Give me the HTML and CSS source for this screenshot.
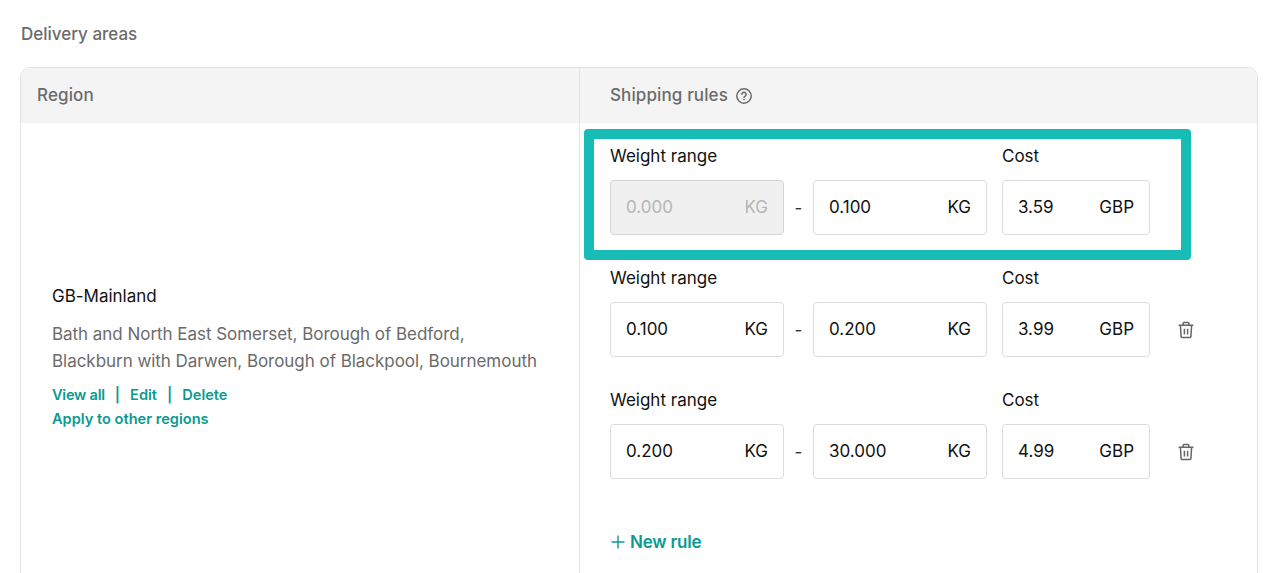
FILE: index.html
```html
<!DOCTYPE html>
<html lang="en">
<head>
<meta charset="utf-8">
<title>Delivery areas</title>
<link rel="stylesheet" href="styles.css">
</head>
<body>
<main class="page">
  <h2 class="title">Delivery areas</h2>
  <section class="table">
    <div class="cell head region-col">Region</div>
    <div class="cell head rules-col">
      Shipping rules
      <svg class="help" width="18" height="18" viewBox="0 0 18 18" fill="none" stroke="#6b6b6b" stroke-width="1.5"><circle cx="9" cy="9" r="7.2"/><path d="M6.9 7.3a2.1 2.1 0 1 1 3.2 1.8c-.7.4-1.1.8-1.1 1.5" stroke-linecap="round"/><circle cx="9" cy="12.6" r=".5" fill="#6b6b6b" stroke-width=".6"/></svg>
    </div>
    <div class="region-body region-col">
      <div class="region-name">GB-Mainland</div>
      <p class="region-list">Bath and North East Somerset, Borough of Bedford, Blackburn with Darwen, Borough of Blackpool, Bournemouth</p>
      <div class="links">
        <div><a class="view-all">View all</a><span class="sep">|</span><a>Edit</a><span class="sep">|</span><a>Delete</a></div>
        <div><a>Apply to other regions</a></div>
      </div>
    </div>
    <div class="rules-body rules-col">
      <div class="rule">
        <div class="labels"><span class="label-weight">Weight range</span><span>Cost</span></div>
        <div class="fields">
          <div class="input weight disabled"><span>0.000</span><span>KG</span></div>
          <span class="dash">-</span>
          <div class="input weight"><span>0.100</span><span>KG</span></div>
          <div class="input cost"><span>3.59</span><span>GBP</span></div>
        </div>
      </div>
      <div class="rule">
        <div class="labels"><span class="label-weight">Weight range</span><span>Cost</span></div>
        <div class="fields">
          <div class="input weight"><span>0.100</span><span>KG</span></div>
          <span class="dash">-</span>
          <div class="input weight"><span>0.200</span><span>KG</span></div>
          <div class="input cost"><span>3.99</span><span>GBP</span></div>
          <svg class="trash" width="18" height="18" viewBox="0 0 18 18" fill="none" stroke="#666" stroke-width="1.5"><path d="M1.6 4.2h14.8M6.1 4V2.6c0-.6.4-1 1-1h3.8c.6 0 1 .4 1 1V4M3.4 4.4l.7 11c0 .7.6 1.2 1.2 1.2h7.4c.6 0 1.2-.5 1.2-1.2l.7-11M7.4 7.8v5.6M10.6 7.8v5.6"/></svg>
        </div>
      </div>
      <div class="rule">
        <div class="labels"><span class="label-weight">Weight range</span><span>Cost</span></div>
        <div class="fields">
          <div class="input weight"><span>0.200</span><span>KG</span></div>
          <span class="dash">-</span>
          <div class="input weight"><span>30.000</span><span>KG</span></div>
          <div class="input cost"><span>4.99</span><span>GBP</span></div>
          <svg class="trash" width="18" height="18" viewBox="0 0 18 18" fill="none" stroke="#666" stroke-width="1.5"><path d="M1.6 4.2h14.8M6.1 4V2.6c0-.6.4-1 1-1h3.8c.6 0 1 .4 1 1V4M3.4 4.4l.7 11c0 .7.6 1.2 1.2 1.2h7.4c.6 0 1.2-.5 1.2-1.2l.7-11M7.4 7.8v5.6M10.6 7.8v5.6"/></svg>
        </div>
      </div>
      <a class="new-rule"><svg width="16" height="16" viewBox="0 0 16 16" fill="none" stroke="#0a9a92" stroke-width="1.4"><path d="M8 1.5v13M1.5 8h13"/></svg>New rule</a>
    </div>
    <div class="highlight"></div>
  </section>
</main>
</body>
</html>
```
FILE: styles.css
```css
* { box-sizing: border-box; }
html, body { margin: 0; height: 573px; overflow: hidden; background: #fff; }
body { font-family: Inter, "Liberation Sans", sans-serif; font-size: 17px; color: #111; }
.page { height: 573px; overflow: hidden; padding: 24px 12px 0 20px; }
.title { margin: 0 0 23px; padding-left: 1px; font-size: 17px; line-height: 20px; font-weight: 500; color: #6b6b6b; }
.table {
  position: relative;
  display: grid;
  grid-template-columns: 559px 1fr;
  grid-template-rows: 55px auto;
  border: 1px solid #e3e3e3;
  border-radius: 10px;
  height: 560px;
  overflow: hidden;
}
.head { background: #f4f4f4; font-weight: 500; color: #6b6b6b; display: flex; align-items: center; line-height: 20px; padding-bottom: 2px; letter-spacing: 0.12px; }
.head.region-col { padding-left: 16px; }
.head.rules-col { padding-left: 30px; gap: 7px; }
.help { margin-top: 2px; }
.region-col { border-right: 1px solid #e3e3e3; }
.region-body { display: flex; flex-direction: column; justify-content: flex-start; padding: 162px 38px 0 31px; }
.region-name { line-height: 22px; color: #111; letter-spacing: -0.02px; }
.region-list { margin: 14px 0 0; line-height: 27px; color: #6b6b6b; letter-spacing: -0.04px; }
.links { margin-top: 8px; font-size: 14.6px; font-weight: 600; line-height: 24px; color: #0a9a92; }
.view-all { letter-spacing: -0.25px; }
.sep { margin: 0 10px; font-weight: 600; }
.rules-body { padding: 23px 0 0 30px; }
.rule { margin-bottom: 33px; }
.labels { display: flex; line-height: 20px; margin-bottom: 14px; }
.label-weight { width: 392px; }
.fields { display: flex; align-items: center; }
.input {
  height: 55px;
  display: flex;
  align-items: center;
  justify-content: space-between;
  padding: 0 15px 2px;
  border: 1px solid #dcdcdc;
  border-radius: 4px;
  background: #fff;
}
.weight { width: 174px; }
.weight + .cost { margin-left: 15px; width: 148px; }
.disabled { background: #f0f0f0; color: #b5b5b5; border-color: #d4d4d4; }
.dash { width: 29px; text-align: center; color: #333; }
.trash { margin-left: 27px; }
.new-rule { display: flex; align-items: center; gap: 4px; margin-top: 52px; font-weight: 600; line-height: 22px; color: #0a9a92; letter-spacing: -0.2px; }
.highlight {
  position: absolute;
  left: 563px; top: 61px;
  width: 607px; height: 131px;
  border: 10px solid #17bcb4;
  border-radius: 4px;
  pointer-events: none;
}
```
